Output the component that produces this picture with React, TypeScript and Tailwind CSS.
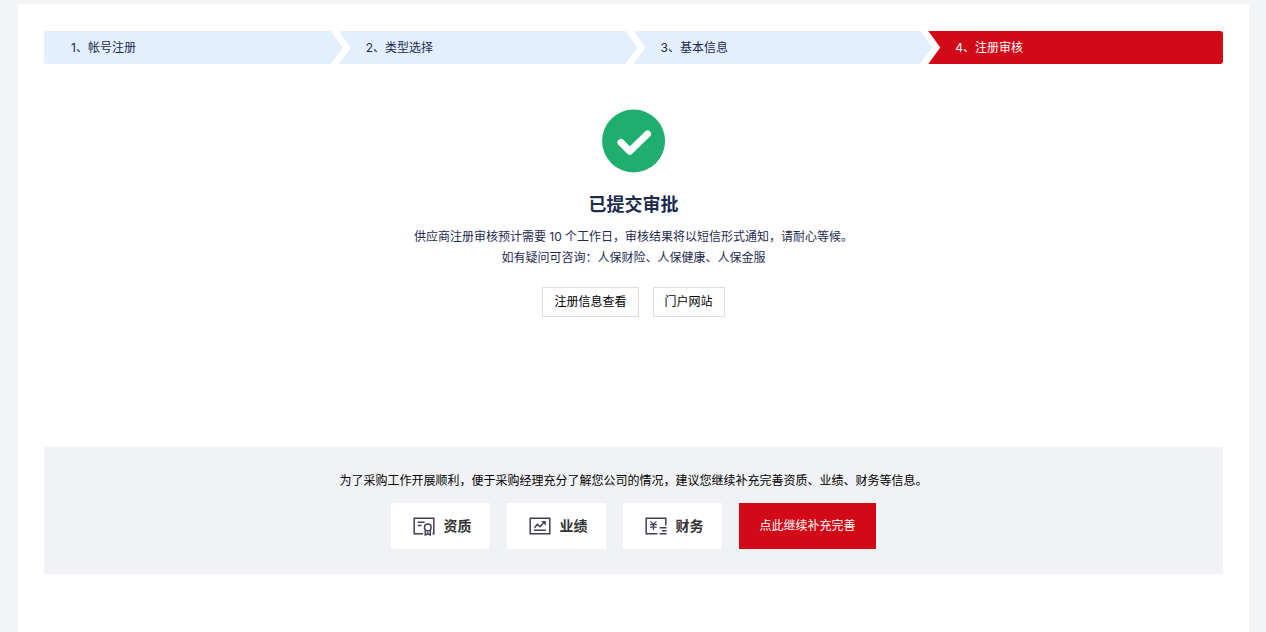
import React from 'react';

type Step = { label: string; active?: boolean };

const steps: Step[] = [
  { label: '1、帐号注册' },
  { label: '2、类型选择' },
  { label: '3、基本信息' },
  { label: '4、注册审核', active: true },
];

function stepShape(index: number) {
  if (index === 0) return '-mr-1 rounded-l-[3px] [clip-path:polygon(0_0,calc(100%-12px)_0,100%_50%,calc(100%-12px)_100%,0_100%)]';
  if (index === steps.length - 1) return 'rounded-r-[3px] [clip-path:polygon(0_0,100%_0,100%_100%,0_100%,12px_50%)]';
  return '-mr-1 [clip-path:polygon(0_0,calc(100%-12px)_0,100%_50%,calc(100%-12px)_100%,0_100%,12px_50%)]';
}

function StepBar() {
  return (
    <ol className="grid grid-cols-4">
      {steps.map((step, i) => (
        <li
          key={step.label}
          aria-current={step.active ? 'step' : undefined}
          className={`flex h-[33px] items-center px-[27px] text-xs ${stepShape(i)} ${step.active ? 'bg-[#d20a18] text-white' : 'bg-[#e3effe]'}`}
        >
          {step.label}
        </li>
      ))}
    </ol>
  );
}

function SuccessIcon() {
  return (
    <svg className="size-16" viewBox="0 0 64 64" fill="none" aria-hidden="true">
      <circle cx="31.6" cy="32" r="31.5" fill="#1fae6d" />
      <path d="M19 33.5L27.8 42.2L45.5 25" stroke="#fff" strokeWidth="7" strokeLinecap="round" strokeLinejoin="round" />
    </svg>
  );
}

function CertificateIcon() {
  return (
    <svg className="h-5 w-[22px]" viewBox="0 -1 22 20" fill="none" stroke="#3f3f5a" strokeWidth="1.5" aria-hidden="true">
      <path d="M10 16.8H1.2V1.2H20.8V16.8H19.4" />
      <path d="M4.8 5.2H11.6M4.8 8.4H8.6" />
      <circle cx="14.8" cy="10.4" r="3.3" />
      <path d="M12.3 13.2V18L14.8 16.9L17.3 18V13.2" />
      <path d="M14.8 14V17" strokeWidth="1" />
    </svg>
  );
}

function TrendIcon() {
  return (
    <svg className="h-5 w-[22px]" viewBox="0 -1 22 20" fill="none" stroke="#3f3f5a" strokeWidth="1.5" aria-hidden="true">
      <path d="M1.2 1.2H20.8V16.8H1.2Z" />
      <path d="M5.4 10.8L8.4 7.4L11 9.8L14.6 5.8" />
      <path d="M12.2 4H16.8V8.6Z" fill="#3f3f5a" stroke="none" />
      <path d="M5 13.2H16.8" />
    </svg>
  );
}

function FinanceIcon() {
  return (
    <svg className="h-5 w-[22px]" viewBox="0 -1 22 20" fill="none" stroke="#3f3f5a" strokeWidth="1.5" aria-hidden="true">
      <path d="M12.4 16.8H1.2V1.2H20.8V8.4" />
      <path d="M5.4 4.4L8.4 7.4L11.4 4.4M8.4 7.4V13M5 7.6H11.8M5 10.2H11.8" strokeWidth="1.3" />
      <path d="M14.6 10.8H21.5M16.8 13.8H21.5M14.6 16.8H21.5" />
    </svg>
  );
}

const supplements = [
  { label: '资质', Icon: CertificateIcon },
  { label: '业绩', Icon: TrendIcon },
  { label: '财务', Icon: FinanceIcon },
];

const outlineButton = 'h-[30px] cursor-pointer border border-[#dddde4] bg-white px-[11px] text-xs text-black';

export default function App() {
  return (
    <div className="flex min-h-screen flex-col bg-[#f3f4f6] pt-1 pr-[17px] pl-[18px] font-['Inter','Noto_Sans_CJK_SC',sans-serif] text-[#1e2b50]">
      <main className="flex-1 bg-white px-[26px] pt-[27px] pb-14">
        <StepBar />

        <section className="mt-[45px] flex flex-col items-center text-center">
          <SuccessIcon />
          <h1 className="mt-[18px] text-lg font-bold">已提交审批</h1>
          <p className="mt-[7px] text-xs leading-[21px]">
            供应商注册审核预计需要 10 个工作日，审核结果将以短信形式通知，请耐心等候。
            <br />
            如有疑问可咨询：人保财险、人保健康、人保金服
          </p>
          <div className="mt-[19px] flex gap-[14px]">
            <button type="button" className={outlineButton}>注册信息查看</button>
            <button type="button" className={outlineButton}>门户网站</button>
          </div>
        </section>

        <section className="mt-[130px] flex flex-col items-center bg-[#f1f2f6] pt-6 pb-[25px]">
          <p className="text-xs leading-5 text-black">
            为了采购工作开展顺利，便于采购经理充分了解您公司的情况，建议您继续补充完善资质、业绩、财务等信息。
          </p>
          <div className="mt-3 flex flex-wrap justify-center gap-[17px]">
            {supplements.map(({ label, Icon }) => (
              <div key={label} className="flex h-[46px] w-[99px] items-center gap-2 bg-white pl-[22px] text-sm font-bold text-[#333]">
                <Icon />
                {label}
              </div>
            ))}
            <button type="button" className="h-[46px] cursor-pointer bg-[#d20a18] px-5 text-xs text-white">
              点此继续补充完善
            </button>
          </div>
        </section>
      </main>
    </div>
  );
}
